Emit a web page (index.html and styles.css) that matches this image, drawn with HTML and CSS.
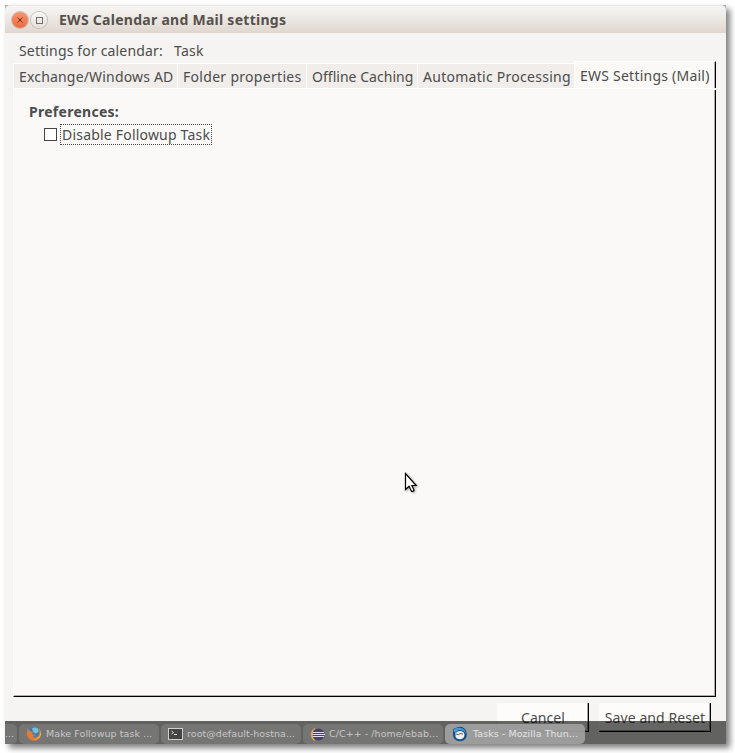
FILE: index.html
```html
<!DOCTYPE html>
<html lang="en">
<head>
<meta charset="utf-8">
<title>EWS Calendar and Mail settings</title>
<link rel="stylesheet" href="styles.css">
</head>
<body>
<div class="window">
  <header class="titlebar">
    <span class="wbtn close"><svg width="16" height="16" viewBox="0 0 16 16"><path d="M5.500 5.500l5 5M10.500 5.500l-5 5" stroke="#6b3020" stroke-width="1"/></svg></span>
    <span class="wbtn max"><svg width="16" height="16" viewBox="0 0 16 16"><rect x="5.500" y="5.500" width="6" height="6" fill="none" stroke="#77706a"/></svg></span>
    <h1 class="title">EWS Calendar and Mail settings</h1>
  </header>
  <div class="info"><span class="info-label">Settings for calendar:</span><span class="info-value">Task</span></div>
  <nav class="tabs">
    <div class="tab t1"><span>Exchange/Windows AD</span></div>
    <div class="tab t2"><span>Folder properties</span></div>
    <div class="tab t3"><span>Offline Caching</span></div>
    <div class="tab t4"><span>Automatic Processing</span></div>
    <div class="tab t5 active"><span>EWS Settings (Mail)</span></div>
  </nav>
  <main class="panel">
    <h2 class="heading">Preferences:</h2>
    <label class="check"><span class="box"></span><span class="check-label">Disable Followup Task</span></label>
  </main>
  <footer class="buttons">
    <div class="button cancel"><span>Cancel</span></div>
    <div class="button save"><span>Save and Reset</span></div>
  </footer>
  <div class="taskbar">
    <div class="task first"><span>...</span></div>
    <div class="task">
      <svg class="icon" width="16" height="16" viewBox="0 0 16 16"><circle cx="8" cy="7.500" r="6.500" fill="#397db0"/><path d="M6 2.500q3-2 6 0 1 2 0 4l-3 1-2-2z" fill="#79bfd9"/><path d="M1.500 3Q0 8 2 11.500q3 4 8 3 5-2 5-7.500 0-3-2-5 1 5-1 8-3 2.500-5 .5l3-1.500-4-1 1-2-2-.5z" fill="#e27b35"/><path d="M14 4q1 5-2 8-2 2-5 2 7 0 8-6z" fill="#f2c35c"/></svg>
      <span class="n1">Make Followup task ...</span>
    </div>
    <div class="task">
      <svg class="icon" width="16" height="16" viewBox="0 0 16 16"><rect x=".5" y="2.500" width="14" height="11" fill="#444" stroke="#d0d0d0"/><path d="M3.500 5l2 1.500-2 1.500M6 8.500h3" fill="none" stroke="#ddd"/></svg>
      <span class="n2">root@default-hostna...</span>
    </div>
    <div class="task">
      <svg class="icon" width="16" height="16" viewBox="0 0 16 16"><path d="M5 2Q1 4 1 8.500T5 15Q2.500 12 2.500 8.500T5 2z" fill="#e9a34b" stroke="#e9a34b" stroke-width=".6"/><circle cx="8.500" cy="8.500" r="6" fill="#484269"/><path d="M2.500 6.500h11.500M2 8.500h13M2.500 10.500h11.500" stroke="#dedce7"/></svg>
      <span class="n3">C/C++ - /home/ebab...</span>
    </div>
    <div class="task current">
      <svg class="icon" width="16" height="16" viewBox="0 0 16 16"><path d="M1 3l3-1q5-3 9 1 3 4 1 9-3 4-8 3-4-1-5-5z" fill="#194e86"/><path d="M1 4q4-3 8-2 4 1 5 5-3-3-6-3-4 0-4 4z" fill="#4a9bd4"/><path d="M3.500 7.500q1-2.500 4-2.500 4 0 5 3 0 4-3 5-4 1-6-2z" fill="#eef0f2"/><path d="M4 8q3 1.500 4-.5l3 .5" fill="none" stroke="#4c4a48" stroke-width=".9"/></svg>
      <span class="n4">Tasks - Mozilla Thun...</span>
    </div>
  </div>
</div>
<svg class="cursor" width="16" height="24" viewBox="0 0 16 24"><path d="M1.500 1.500v16l3.500-3.300 2.600 5.300q2.500 0 2.300-1.800l-2-4.200h4.300z" fill="#fff" stroke="#000" stroke-width="1.200"/></svg>
</body>
</html>
```
FILE: styles.css
```css
* { box-sizing: border-box; }
body {
  margin: 0;
  padding: 5px;
  width: 735px;
  height: 753px;
  overflow: hidden;
  background: #fff;
  color: #4c4c4c;
  font: 14px/20px "Noto Sans", "Open Sans", sans-serif;
}
span, h1, h2 { white-space: nowrap; }
h1, h2 { margin: 0; }
.window {
  position: relative;
  width: 721px;
  height: 739px;
  background: linear-gradient(#b5aea9 0 8px, #f5f4f2 8px);
  box-shadow: 4px 4px 6px rgba(0, 0, 0, .5);
}
.titlebar {
  display: flex;
  align-items: center;
  height: 28px;
  padding-left: 7px;
  border-top: 1px solid #ebe9e7;
  border-radius: 5px 5px 0 0;
  background: linear-gradient(#f7f6f5, #dfd7cf);
}
.wbtn {
  width: 16px;
  height: 16px;
  margin-right: 3px;
  border-radius: 50%;
  box-shadow: 0 0 0 1px #c4bcb4;
}
.wbtn svg { display: block; }
.close { background: linear-gradient(#f69472, #ee6b3e); }
.max { background: linear-gradient(#f8f7f6, #e4dfda); }
.title { margin-left: 9px; font-size: 14px; font-weight: 700; letter-spacing: .27px; color: #57514b; }
.info { display: flex; height: 28px; padding: 8px 0 0 14px; }
.info-label { width: 155px; letter-spacing: .16px; }
.info-value { letter-spacing: .3px; }
.tabs { display: flex; align-items: flex-end; height: 27px; margin-left: 8px; }
.tab {
  height: 25px;
  padding: 3px 0 0 5px;
  border-left: 1px solid #fff;
  border-top: 1px solid #fff;
  background: #f0edea;
}
.t1 { width: 164px; letter-spacing: .18px; }
.t2 { width: 129px; letter-spacing: .3px; }
.t3 { width: 111px; letter-spacing: .03px; }
.t4 { width: 157px; letter-spacing: .27px; }
.tab.t5 {
  width: 142px;
  height: 27px;
  padding-top: 4px;
  letter-spacing: .23px;
  background: #faf9f7;
  border-right: 1px solid #000;
  box-shadow: inset -1px 0 #b5aaa4;
}
.panel {
  position: relative;
  width: 703px;
  height: 609px;
  margin-left: 8px;
  padding: 13px 0 0 15px;
  background: #faf9f8;
  border: 1px solid #fff;
  border-right-color: #000;
  border-bottom-color: #000;
  box-shadow: inset -1px -1px #b5aaa4;
}
.panel::before {
  content: "";
  position: absolute;
  right: -1px;
  top: -1px;
  width: 2px;
  height: 2px;
  background: #fff;
}
.heading { font-size: 14px; line-height: 20px; letter-spacing: .27px; }
.check { display: flex; align-items: center; gap: 3px; height: 22px; margin: 1px 0 0 15px; }
.box { width: 13px; height: 13px; border: 1px solid #444; background: #fff; }
.check-label { width: 152px; height: 21px; padding-left: 1px; line-height: 19px; letter-spacing: .2px; border: 1px dotted #444; }
.buttons { display: flex; gap: 10px; margin: 6px 0 0 492px; }
.button {
  height: 29px;
  padding: 5px 0 0 1px;
  text-align: center;
  letter-spacing: .08px;
  background: #fdfcfb;
  border-right: 1px solid #000;
  border-bottom: 1px solid #000;
  box-shadow: inset -1px -1px #aaa29c;
}
.cancel { width: 92px; }
.save { width: 112px; }
.taskbar {
  position: absolute;
  left: 0;
  right: 0;
  bottom: 0;
  display: flex;
  gap: 2px;
  height: 23px;
  padding-top: 3px;
  background: rgba(0, 0, 0, .6);
  color: #c8c8c8;
  font: 9.5px/19px "DejaVu Sans", sans-serif;
}
.task {
  display: flex;
  width: 140px;
  padding-left: 7px;
  gap: 4px;
  border-radius: 5px;
  background: #757574;
}
.task.first { width: 12px; padding-left: 0; border-radius: 0 5px 5px 0; }
.n1, .n2, .n3, .n4 { letter-spacing: .06px; }
.n2, .n3 { margin-left: -1px; }
.current { background: rgba(160, 160, 160, .93); color: #e4e4e4; }
.icon { margin-top: 2px; flex: none; }
.n4 { margin-left: 1px; }
.cursor { position: absolute; left: 404px; top: 472px; filter: drop-shadow(1px 1px 1px rgba(0, 0, 0, .35)); }
```
